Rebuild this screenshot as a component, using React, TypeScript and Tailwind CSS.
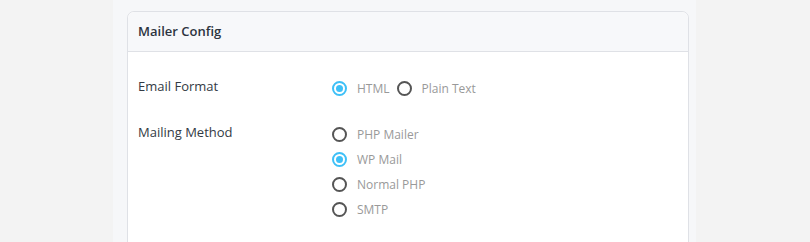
import React from "react";

function Radio({ checked, label }: { checked?: boolean; label: string }) {
  return (
    <label className="flex items-center gap-[10px] h-[25px]">
      <span
        className={
          checked
            ? "w-[15px] h-[15px] rounded-full border-[2px] border-[#3ec0f7] flex items-center justify-center"
            : "w-[15px] h-[15px] rounded-full border-[2px] border-[#555555]"
        }
      >
        {checked && <span className="w-[7px] h-[7px] rounded-full bg-[#3ec0f7]" />}
      </span>
      <span className="text-[12px] text-[#999999]">{label}</span>
    </label>
  );
}

export default function App() {
  return (
    <div
      className="w-[810px] h-[242px] bg-[#f3f3f3] flex overflow-hidden"
      style={{ fontFamily: '"Open Sans", "Noto Sans", sans-serif' }}
    >
      <div className="ml-[113px] w-[583px] bg-[#f6f7f9] pl-[14px] pr-[7px] pt-[11px]">
        <div className="border border-[#dfe1e6] rounded-t-[7px] bg-white h-[260px]">
          <div className="h-[40px] bg-[#f7f8fa] border-b border-[#dfe1e6] rounded-t-[7px] flex items-center px-[10px]">
            <span className="text-[13px] font-semibold text-[#2c3440]">Mailer Config</span>
          </div>
          <div className="px-[10px] pt-[24px]">
            <div className="flex">
              <div className="w-[194px] text-[13px] text-[#333a44] leading-[20px]">Email Format</div>
              <div className="flex items-center gap-[7px] mt-[0px]">
                <Radio checked label="HTML" />
                <Radio label="Plain Text" />
              </div>
            </div>
            <div className="flex mt-[21px]">
              <div className="w-[194px] text-[13px] text-[#333a44] leading-[20px]">Mailing Method</div>
              <div className="flex flex-col mt-[0px]">
                <Radio label="PHP Mailer" />
                <Radio checked label="WP Mail" />
                <Radio label="Normal PHP" />
                <Radio label="SMTP" />
              </div>
            </div>
          </div>
        </div>
      </div>
    </div>
  );
}
